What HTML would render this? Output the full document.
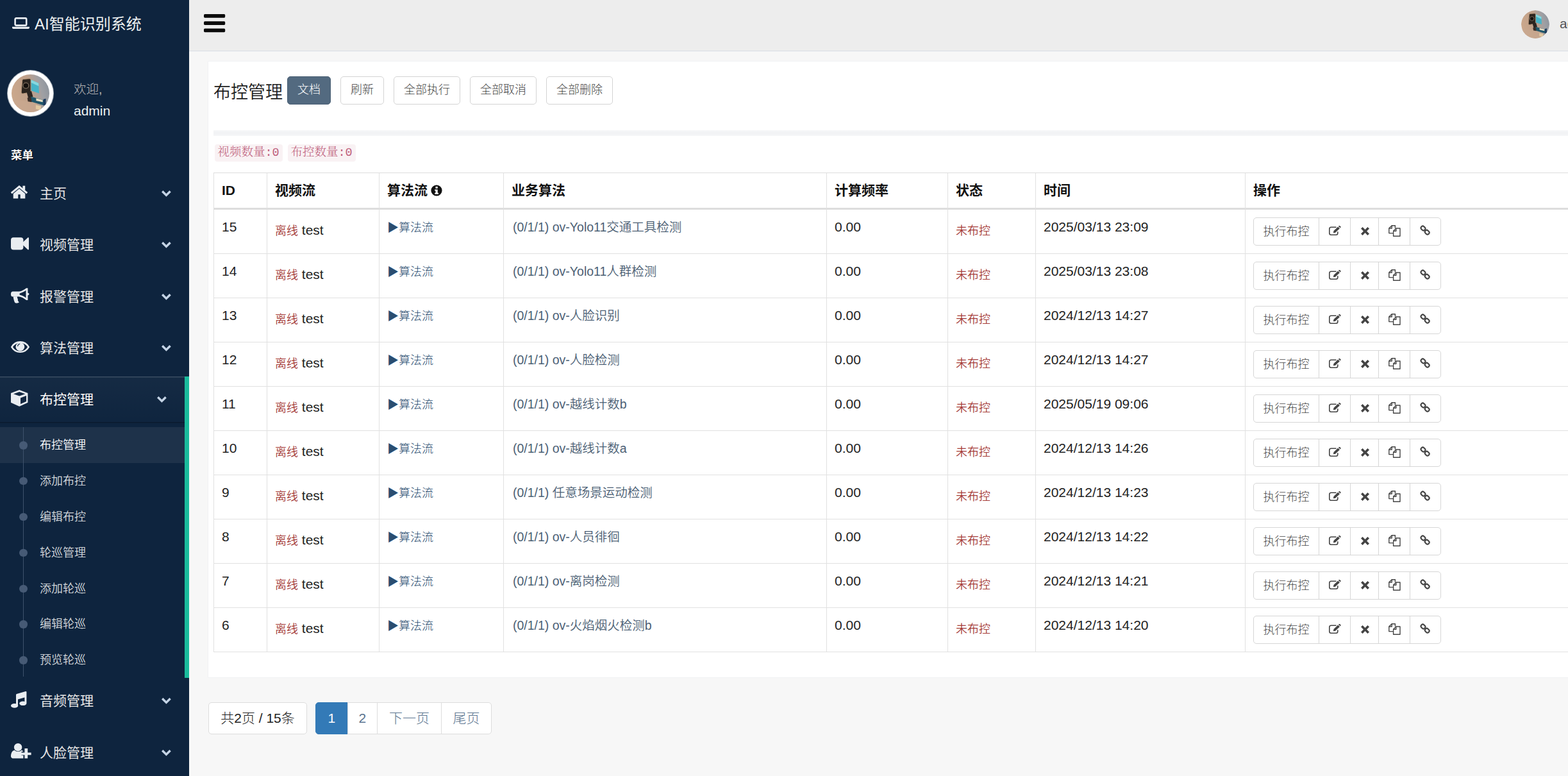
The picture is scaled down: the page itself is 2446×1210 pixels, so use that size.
<!DOCTYPE html>
<html lang="zh-CN">
<head>
<meta charset="utf-8">
<title>AI智能识别系统 - 布控管理</title>
<style>
*{box-sizing:border-box;margin:0;padding:0}
html,body{width:2446px;height:1210px;overflow:hidden}
body{background:#f7f7f7;font-weight:300;font-family:"Liberation Sans","Noto Sans CJK SC",sans-serif;font-size:21px;color:#222;position:relative;line-height:30px}
a{text-decoration:none;color:inherit}
svg{display:block}
ul{list-style:none}

/* ---------- sidebar ---------- */
#side{position:absolute;left:0;top:0;width:295px;height:1210px;background:#0e243e;color:#e7e7e7;overflow:hidden;font-weight:400}
#brand{position:absolute;left:18.5px;top:23px;height:30px;color:#ecf0f1;font-size:24px;line-height:30px;white-space:nowrap;padding-left:35.5px}
#brand svg{position:absolute;left:0;top:4.2px}
#avatar{position:absolute;left:11px;top:109px;width:73px;height:73px;border-radius:50%;background:#fff;border:1px solid rgba(52,73,94,.44);overflow:hidden}
#avatar svg{position:absolute;left:6px;top:6px}
#welcome{position:absolute;left:115px;top:125px;font-size:19.5px;color:#bab8b8;line-height:28px;font-weight:300}
#uname{position:absolute;left:115px;top:159px;font-size:21px;color:#ecf0f1;line-height:28px}
#menuh{position:absolute;left:17px;top:229px;font-size:17.5px;font-weight:bold;color:#fff;line-height:26px;text-shadow:1px 1px #000}
#menu{position:absolute;left:0;top:265.75px;width:295px}
#menu>li{position:relative}
#menu>li>a{display:block;position:relative;height:71.5px;margin-bottom:9px;font-size:21px;line-height:71.5px;padding-left:62px;color:#e7e7e7;white-space:nowrap}
#menu>li>a .ic{position:absolute;left:17px;top:-2px;height:71.5px;display:flex;align-items:center}
#menu>li>a .chev{position:absolute;left:252px;top:31px}
#menu>li.active{border-right:7px solid #1abb9c;margin-top:-1px}
#menu>li.active>a{margin-bottom:7.75px;background:linear-gradient(rgba(255,255,255,.03),rgba(255,255,255,.005));box-shadow:rgba(0,0,0,.25) 0 1.5px 0, inset rgba(255,255,255,.16) 0 1.5px 0;text-shadow:rgba(0,0,0,.25) 0 -1px 0;color:#fff}
#menu>li.active>a .chev{left:245px}
#sub{position:relative}
#sub:after{content:"";position:absolute;left:35.5px;top:0;bottom:2px;width:1.5px;background:#3d526c}
#sub li{position:relative;height:55.9px;line-height:57.9px;font-size:18px;padding-left:62px;color:rgba(255,255,255,.84);font-weight:350;white-space:nowrap}
#sub li:before{content:"";position:absolute;left:30px;top:22px;width:12.5px;height:12.5px;border-radius:50%;background:#465a75;z-index:1}
#sub li.cur{background:rgba(255,255,255,.065);color:#fff}

/* ---------- top bar ---------- */
#top{position:absolute;left:295px;top:0;width:2151px;height:80px;background:#ededed;border-bottom:1.5px solid #d9dee4}
#bars{position:absolute;left:23px;top:22px}
#tav{position:absolute;left:2078px;top:16px;width:44px;height:44px;border-radius:50%;overflow:hidden}
#tname{position:absolute;left:2138px;top:22px;font-size:21px;color:#515356;line-height:30px;white-space:nowrap}

/* ---------- panel ---------- */
#panel{position:absolute;left:324px;top:95px;width:2200px;height:962px;background:#fff;border:1px solid #f1f2f4}
#title{position:absolute;left:8px;top:28px;font-weight:350;font-size:27px;line-height:40px;color:#1c1c1c;white-space:nowrap}
.btn{position:absolute;top:22.7px;height:44px;border:1px solid #d4d4d4;border-radius:5px;background:#fff;color:#444;font-size:18px;line-height:40px;text-align:center;white-space:nowrap}
.btn.dark{background:#536a80;border-color:#4b6075;color:#fff}
#hr{position:absolute;left:8px;top:107px;width:2200px;height:9px;background:linear-gradient(#f7f8f9,#f2f3f5 35%,#f2f3f5 65%,#f7f8f9)}
code{position:absolute;top:129px;height:27px;line-height:27px;padding:0 5px;font-family:"Liberation Mono","Noto Serif CJK SC",monospace;font-size:18.5px;color:#bf5f7c;font-weight:300;background:#f9f2f4;border-radius:4px;white-space:nowrap}

/* ---------- table ---------- */
#tb{position:absolute;left:8px;top:173px;border-collapse:separate;border-spacing:0;table-layout:fixed;width:2200px;border-top:1px solid #ddd}
#tb th,#tb td{border-left:1px solid #e1e1e1;border-bottom:1px solid #e1e1e1;padding:12px 12px 0 12px;text-align:left;vertical-align:top;white-space:nowrap;overflow:hidden}
#tb th{height:57px;font-weight:bold;border-bottom:3px solid #ddd;line-height:30px;color:#111}
#tb td{height:69px;line-height:30px;color:#222}
.c2{position:relative;top:5px}
.lab{font-size:18px;color:#a53c38;font-weight:350}
.flow{font-size:18px;color:#2a4d70}
.alg{font-size:19.5px;color:#4b6074;position:relative;left:2px;font-weight:350}
.bg{display:flex;height:44px;width:293px;border:1px solid #d6d6d6;border-radius:5px;background:#fff}
.bg>span{display:flex;align-items:center;justify-content:center;padding-bottom:3px;border-right:1px solid #d6d6d6;font-size:18px;color:#444;height:100%}
.bg>span:last-child{border-right:0}
.b1{width:102px;padding-bottom:0 !important;color:#484848 !important}.b2{width:49px}.b3{width:44px;padding-bottom:1.5px !important;padding-left:1px}.b4{width:49px}.b5{width:47px}

/* ---------- pagination ---------- */
.pg{position:absolute;top:1095px;height:49.5px;border:1px solid #ddd;background:#fff;font-size:21px;line-height:47px;text-align:center;color:#5a738e;white-space:nowrap}
</style>
</head>
<body>

<div id="side">
  <a id="brand"><svg width="27" height="19" viewBox="0 0 27 19"><rect x="4.6" y="1.4" width="17.6" height="11.2" rx="1.6" fill="none" stroke="#e9edf1" stroke-width="2.6"/><path fill="#e9edf1" d="M0 14.8h27v1.3c0 1.1-.9 2-2 2H2c-1.1 0-2-.9-2-2z"/></svg>AI智能识别系统</a>
  <div id="avatar"><svg width="59" height="59" viewBox="0 0 60 60"><defs><linearGradient id="avg59" x1="0" y1=".55" x2="1" y2=".3"><stop offset="0" stop-color="#cba88c"/><stop offset=".5" stop-color="#bfa08a"/><stop offset=".78" stop-color="#9fa0a4"/><stop offset="1" stop-color="#8d949c"/></linearGradient><clipPath id="cavg59"><circle cx="30" cy="30" r="30"/></clipPath></defs><g clip-path="url(#cavg59)"><rect width="60" height="60" fill="url(#avg59)"/><path d="M0 40 40 44 44 60H0z" fill="#c9a890" opacity=".7"/><path d="M30.7 8.4 42.9 14 43.7 30 31.1 25.8z" fill="#46b4c8"/><path d="M30.7 8.4 42.9 14 43.1 18.6 30.8 13z" fill="#86d8e0"/><path d="M17 9.6Q17 7.7 19 7.5L28.5 6.8Q30.5 6.8 30.5 8.8V26Q30.5 28 28.5 28.6L18 30.6Q15.6 30.9 15.4 28.5z" fill="#2b241e" stroke="#b39476" stroke-width="1"/><circle cx="22.8" cy="17.8" r="4.5" fill="#15110e" stroke="#7a6a5a" stroke-width="1.3"/><path d="M24 28 31.5 26.5 34 35 27 39z" fill="#2c2622"/><path d="M30.5 35 51 41 51 49 30 43z" fill="#1f566a"/><path d="M25 37 31 36 32 44 26 43z" fill="#3a2e28"/><path d="M39 38 49.5 40.6 49.5 44 39 41.6z" fill="#e9dfc6"/><path d="M38.5 48.5 47 50 46 56.5 38.5 55z" fill="#e2c9a0"/><path d="M50.5 39.5 54.5 38.5 54.5 48 50.5 49.5z" fill="#1d3c5e"/></g></svg></div>
  <div id="welcome">欢迎,</div>
  <div id="uname">admin</div>
  <div id="menuh">菜单</div>
  <ul id="menu">
    <li><a><span class="ic"><svg width="26" height="21" viewBox="0 0 26 21"><g fill="#e9edf1"><path d="M13 5.3 3.7 12.9v7.5h7.6v-6.2h3.4v6.2h7.6v-7.5z"/><rect x="18.4" y="0.7" width="3.8" height="7"/><path d="M13 0 -.2 10.9l1.9 2.3L13 4l11.3 9.2 1.9-2.3z"/></g></svg></span>主页<span class="chev"><svg width="15" height="10" viewBox="0 0 15 10"><path fill="#c5d4e6" d="M0 2.4 2.4 0 7.4 5 12.4 0 14.8 2.4 7.4 9.8z"/></svg></span></a></li>
    <li><a><span class="ic"><svg width="28" height="20" viewBox="0 0 28 20"><g fill="#e9edf1"><rect x="0" y="0.2" width="19.4" height="19.4" rx="4"/><path d="M19 7.6 26.4.6c.7-.6 1.6-.2 1.6.6v17.4c0 .8-.9 1.2-1.6.6L19 12.2z"/></g></svg></span>视频管理<span class="chev"><svg width="15" height="10" viewBox="0 0 15 10"><path fill="#c5d4e6" d="M0 2.4 2.4 0 7.4 5 12.4 0 14.8 2.4 7.4 9.8z"/></svg></span></a></li>
    <li><a><span class="ic"><svg width="29" height="24" viewBox="0 0 29 24"><g fill="#e9edf1"><path fill-rule="evenodd" d="M3 5.6h9.6C17 5 21 2.6 24 .2h2.4v7.6c1.3 0 2 .8 2 1.8s-.7 1.8-2 1.8V19H24c-3-2.4-7-4.8-11.4-5.4H3c-1.8 0-3-1.4-3-3.2V8.8C0 7 1.2 5.6 3 5.6zM23.5 3.8c-2.9 2.1-6.2 3.8-9.9 4.6v2.4c3.7.8 7 2.5 9.9 4.6z"/><path d="M3.6 13.2h6.4c-.4 1.6.1 3 1 4.2-.7 1.4.2 3.3 1.9 4.9-.9 1.500-5 1.700-6.600.8-.9-2-2.200-5.300-2.700-9.900z"/></g></svg></span>报警管理<span class="chev"><svg width="15" height="10" viewBox="0 0 15 10"><path fill="#c5d4e6" d="M0 2.4 2.4 0 7.4 5 12.4 0 14.8 2.4 7.4 9.8z"/></svg></span></a></li>
    <li><a><span class="ic"><svg width="29" height="18.4" viewBox="0 0 29 18.4" style="overflow:visible"><path d="M1.4 9.1C7.5 -1.2 21.5 -1.2 27.6 9.1 21.5 19.4 7.5 19.4 1.4 9.1z" fill="none" stroke="#e9edf1" stroke-width="2.6"/><ellipse cx="14.4" cy="8.7" rx="6.9" ry="6.5" fill="#e9edf1"/><path d="M10.6 7.6c.2-1.8 1.4-3 3.2-3.4" fill="none" stroke="#0e243e" stroke-width="1.1" stroke-linecap="round"/></svg></span>算法管理<span class="chev"><svg width="15" height="10" viewBox="0 0 15 10"><path fill="#c5d4e6" d="M0 2.4 2.4 0 7.4 5 12.4 0 14.8 2.4 7.4 9.8z"/></svg></span></a></li>
    <li class="active"><a><span class="ic"><svg width="27" height="26" viewBox="0 0 27 26"><path fill="#e9edf1" fill-rule="evenodd" d="M13.2 0 26.4 5.1V19.7L13.2 25.8 0 19.7V5.1zM13.2 2.9 4 6.2l9.2 3.3 9.2-3.3zM15 12.6V22l9-4.1V9z"/></svg></span>布控管理<span class="chev"><svg width="15" height="10" viewBox="0 0 15 10"><path fill="#c5d4e6" d="M0 2.4 2.4 0 7.4 5 12.4 0 14.8 2.4 7.4 9.8z"/></svg></span></a>
      <ul id="sub">
        <li class="cur">布控管理</li>
        <li>添加布控</li>
        <li>编辑布控</li>
        <li>轮巡管理</li>
        <li>添加轮巡</li>
        <li>编辑轮巡</li>
        <li>预览轮巡</li>
      </ul>
    </li>
    <li><a><span class="ic"><svg width="25" height="26" viewBox="0 0 25 26"><g fill="#e9edf1"><path d="M8 5.6c0-.8.5-1.4 1.2-1.6L23 .1c.8-.2 1.4.3 1.4 1.1v17H21.4V9.4L11 12.4v9.8H8z"/><ellipse cx="5.6" cy="22.4" rx="5.6" ry="3.3"/><ellipse cx="18.8" cy="18.8" rx="5.6" ry="3.3"/></g></svg></span>音频管理<span class="chev"><svg width="15" height="10" viewBox="0 0 15 10"><path fill="#c5d4e6" d="M0 2.4 2.4 0 7.4 5 12.4 0 14.8 2.4 7.4 9.8z"/></svg></span></a></li>
    <li><a><span class="ic"><svg width="32" height="24" viewBox="0 0 32 24"><g fill="#e9edf1"><circle cx="11.1" cy="6.2" r="6.2"/><path d="M5.8 10.8c1.4 1.4 3.2 2.2 5.3 2.2s3.9-.8 5.3-2.2c1.3.2 2.3 1 3 2.2h-2.9v5.8h2.9v4.8H4.2C1.8 23.6 0 22.4 0 20.2c0-4.4 1.8-8.8 5.8-9.4z"/><path d="M21.4 8h4.8v6.4h5.4v3.8h-5.4v5.4h-4.8v-5.4h-5.6v-3.8h5.6z"/></g></svg></span>人脸管理<span class="chev"><svg width="15" height="10" viewBox="0 0 15 10"><path fill="#c5d4e6" d="M0 2.4 2.4 0 7.4 5 12.4 0 14.8 2.4 7.4 9.8z"/></svg></span></a></li>
  </ul>
</div>

<div id="top">
  <div id="bars"><svg width="34" height="29" viewBox="0 0 34 29"><g fill="#0b0b0b"><rect x="0" y="0" width="33.2" height="5.7" rx="1.6"/><rect x="0" y="11.2" width="33.2" height="5.7" rx="1.6"/><rect x="0" y="22.5" width="33.2" height="5.7" rx="1.6"/></g></svg></div>
  <div id="tav"><svg width="44" height="44" viewBox="0 0 60 60"><defs><linearGradient id="avg44" x1="0" y1=".55" x2="1" y2=".3"><stop offset="0" stop-color="#cba88c"/><stop offset=".5" stop-color="#bfa08a"/><stop offset=".78" stop-color="#9fa0a4"/><stop offset="1" stop-color="#8d949c"/></linearGradient><clipPath id="cavg44"><circle cx="30" cy="30" r="30"/></clipPath></defs><g clip-path="url(#cavg44)"><rect width="60" height="60" fill="url(#avg44)"/><path d="M0 40 40 44 44 60H0z" fill="#c9a890" opacity=".7"/><path d="M30.7 8.4 42.9 14 43.7 30 31.1 25.8z" fill="#46b4c8"/><path d="M30.7 8.4 42.9 14 43.1 18.6 30.8 13z" fill="#86d8e0"/><path d="M17 9.6Q17 7.7 19 7.5L28.5 6.8Q30.5 6.8 30.5 8.8V26Q30.5 28 28.5 28.6L18 30.6Q15.6 30.9 15.4 28.5z" fill="#2b241e" stroke="#b39476" stroke-width="1"/><circle cx="22.8" cy="17.8" r="4.5" fill="#15110e" stroke="#7a6a5a" stroke-width="1.3"/><path d="M24 28 31.5 26.5 34 35 27 39z" fill="#2c2622"/><path d="M30.5 35 51 41 51 49 30 43z" fill="#1f566a"/><path d="M25 37 31 36 32 44 26 43z" fill="#3a2e28"/><path d="M39 38 49.5 40.6 49.5 44 39 41.6z" fill="#e9dfc6"/><path d="M38.5 48.5 47 50 46 56.5 38.5 55z" fill="#e2c9a0"/><path d="M50.5 39.5 54.5 38.5 54.5 48 50.5 49.5z" fill="#1d3c5e"/></g></svg></div>
  <div id="tname">admin</div>
</div>

<div id="panel">
  <div id="title">布控管理</div>
  <a class="btn dark" style="left:123px;width:68px">文档</a>
  <a class="btn" style="left:206px;width:68px">刷新</a>
  <a class="btn" style="left:289px;width:104px">全部执行</a>
  <a class="btn" style="left:408px;width:104px">全部取消</a>
  <a class="btn" style="left:527px;width:104px">全部删除</a>
  <div id="hr"></div>
  <code style="left:9.5px">视频数量:0</code>
  <code style="left:123.5px">布控数量:0</code>
  <table id="tb">
    <colgroup><col style="width:83px"><col style="width:175px"><col style="width:194px"><col style="width:504px"><col style="width:189px"><col style="width:137px"><col style="width:327px"><col></colgroup>
    <thead><tr><th>ID</th><th>视频流</th><th>算法流 <svg width="18" height="18" viewBox="0 0 18 18" style="display:inline-block;vertical-align:-1.5px;margin-left:-1px"><circle cx="9" cy="9" r="8.6" fill="#111"/><g fill="#fff"><rect x="7.5" y="2.9" width="3.2" height="2.9"/><path d="M6.2 7.4h4.5v5.3h1.3v2H6.2v-2h1.3V9.4H6.2z"/></g></svg></th><th>业务算法</th><th>计算频率</th><th>状态</th><th>时间</th><th>操作</th></tr></thead>
    <tbody>
      <tr><td>15</td><td><div class="c2"><span class="lab">离线</span> test</div></td><td><span class="flow">▶算法流</span></td><td><span class="alg">(0/1/1) ov-Yolo11交通工具检测</span></td><td>0.00</td><td><div class="c2"><span class="lab">未布控</span></div></td><td>2025/03/13 23:09</td><td><div class="bg"><span class="b1">执行布控</span><span class="b2"><svg width="19" height="15" viewBox="0 0 19 15"><path d="M11 2.2H3.5c-1.5 0-2.7 1.2-2.7 2.7v6.6c0 1.5 1.2 2.7 2.7 2.7h7.6c1.5 0 2.7-1.2 2.7-2.7V9.8" fill="none" stroke="#444" stroke-width="1.6" stroke-linecap="round"/><path fill="#444" d="M6.8 11.2 7.5 8.1 14.2 1.5 16.9 4.2 10.1 10.8zM15 .800l.7-.7c.4-.4 1-.4 1.4 0l1.2 1.2c.4.4.4 1 0 1.4l-.7.7z"/></svg></span><span class="b3"><svg width="13" height="13" viewBox="0 0 13 13"><path fill="#444" d="M2.6 0 6.5 3.9 10.4 0 13 2.6 9.1 6.5 13 10.4 10.4 13 6.5 9.1 2.6 13 0 10.4 3.9 6.5 0 2.6z"/></svg></span><span class="b4"><svg width="19" height="18" viewBox="0 0 19 18"><g fill="none" stroke="#444" stroke-width="1.4" stroke-linejoin="round"><path d="M7.6 12.6H.8V5L5.2.7h5.2v4"/><path d="M5.2.7V5H.8"/><path d="M7.6 9.2 11.8 5h6.2v12.2H7.6z"/><path d="M11.8 5v4.2H7.6"/></g></svg></span><span class="b5"><svg width="17" height="17" viewBox="0 0 17 17"><g fill="none" stroke="#444" stroke-width="2.1"><rect x="-3.6" y="-2.8" width="7.2" height="5.6" rx="2.8" transform="translate(5 5) rotate(45)"/><rect x="-3.6" y="-2.8" width="7.2" height="5.6" rx="2.8" transform="translate(11.2 11.2) rotate(45)"/></g></svg></span></div></td></tr>
      <tr><td>14</td><td><div class="c2"><span class="lab">离线</span> test</div></td><td><span class="flow">▶算法流</span></td><td><span class="alg">(0/1/1) ov-Yolo11人群检测</span></td><td>0.00</td><td><div class="c2"><span class="lab">未布控</span></div></td><td>2025/03/13 23:08</td><td><div class="bg"><span class="b1">执行布控</span><span class="b2"><svg width="19" height="15" viewBox="0 0 19 15"><path d="M11 2.2H3.5c-1.5 0-2.7 1.2-2.7 2.7v6.6c0 1.5 1.2 2.7 2.7 2.7h7.6c1.5 0 2.7-1.2 2.7-2.7V9.8" fill="none" stroke="#444" stroke-width="1.6" stroke-linecap="round"/><path fill="#444" d="M6.8 11.2 7.5 8.1 14.2 1.5 16.9 4.2 10.1 10.8zM15 .800l.7-.7c.4-.4 1-.4 1.4 0l1.2 1.2c.4.4.4 1 0 1.4l-.7.7z"/></svg></span><span class="b3"><svg width="13" height="13" viewBox="0 0 13 13"><path fill="#444" d="M2.6 0 6.5 3.9 10.4 0 13 2.6 9.1 6.5 13 10.4 10.4 13 6.5 9.1 2.6 13 0 10.4 3.9 6.5 0 2.6z"/></svg></span><span class="b4"><svg width="19" height="18" viewBox="0 0 19 18"><g fill="none" stroke="#444" stroke-width="1.4" stroke-linejoin="round"><path d="M7.6 12.6H.8V5L5.2.7h5.2v4"/><path d="M5.2.7V5H.8"/><path d="M7.6 9.2 11.8 5h6.2v12.2H7.6z"/><path d="M11.8 5v4.2H7.6"/></g></svg></span><span class="b5"><svg width="17" height="17" viewBox="0 0 17 17"><g fill="none" stroke="#444" stroke-width="2.1"><rect x="-3.6" y="-2.8" width="7.2" height="5.6" rx="2.8" transform="translate(5 5) rotate(45)"/><rect x="-3.6" y="-2.8" width="7.2" height="5.6" rx="2.8" transform="translate(11.2 11.2) rotate(45)"/></g></svg></span></div></td></tr>
      <tr><td>13</td><td><div class="c2"><span class="lab">离线</span> test</div></td><td><span class="flow">▶算法流</span></td><td><span class="alg">(0/1/1) ov-人脸识别</span></td><td>0.00</td><td><div class="c2"><span class="lab">未布控</span></div></td><td>2024/12/13 14:27</td><td><div class="bg"><span class="b1">执行布控</span><span class="b2"><svg width="19" height="15" viewBox="0 0 19 15"><path d="M11 2.2H3.5c-1.5 0-2.7 1.2-2.7 2.7v6.6c0 1.5 1.2 2.7 2.7 2.7h7.6c1.5 0 2.7-1.2 2.7-2.7V9.8" fill="none" stroke="#444" stroke-width="1.6" stroke-linecap="round"/><path fill="#444" d="M6.8 11.2 7.5 8.1 14.2 1.5 16.9 4.2 10.1 10.8zM15 .800l.7-.7c.4-.4 1-.4 1.4 0l1.2 1.2c.4.4.4 1 0 1.4l-.7.7z"/></svg></span><span class="b3"><svg width="13" height="13" viewBox="0 0 13 13"><path fill="#444" d="M2.6 0 6.5 3.9 10.4 0 13 2.6 9.1 6.5 13 10.4 10.4 13 6.5 9.1 2.6 13 0 10.4 3.9 6.5 0 2.6z"/></svg></span><span class="b4"><svg width="19" height="18" viewBox="0 0 19 18"><g fill="none" stroke="#444" stroke-width="1.4" stroke-linejoin="round"><path d="M7.6 12.6H.8V5L5.2.7h5.2v4"/><path d="M5.2.7V5H.8"/><path d="M7.6 9.2 11.8 5h6.2v12.2H7.6z"/><path d="M11.8 5v4.2H7.6"/></g></svg></span><span class="b5"><svg width="17" height="17" viewBox="0 0 17 17"><g fill="none" stroke="#444" stroke-width="2.1"><rect x="-3.6" y="-2.8" width="7.2" height="5.6" rx="2.8" transform="translate(5 5) rotate(45)"/><rect x="-3.6" y="-2.8" width="7.2" height="5.6" rx="2.8" transform="translate(11.2 11.2) rotate(45)"/></g></svg></span></div></td></tr>
      <tr><td>12</td><td><div class="c2"><span class="lab">离线</span> test</div></td><td><span class="flow">▶算法流</span></td><td><span class="alg">(0/1/1) ov-人脸检测</span></td><td>0.00</td><td><div class="c2"><span class="lab">未布控</span></div></td><td>2024/12/13 14:27</td><td><div class="bg"><span class="b1">执行布控</span><span class="b2"><svg width="19" height="15" viewBox="0 0 19 15"><path d="M11 2.2H3.5c-1.5 0-2.7 1.2-2.7 2.7v6.6c0 1.5 1.2 2.7 2.7 2.7h7.6c1.5 0 2.7-1.2 2.7-2.7V9.8" fill="none" stroke="#444" stroke-width="1.6" stroke-linecap="round"/><path fill="#444" d="M6.8 11.2 7.5 8.1 14.2 1.5 16.9 4.2 10.1 10.8zM15 .800l.7-.7c.4-.4 1-.4 1.4 0l1.2 1.2c.4.4.4 1 0 1.4l-.7.7z"/></svg></span><span class="b3"><svg width="13" height="13" viewBox="0 0 13 13"><path fill="#444" d="M2.6 0 6.5 3.9 10.4 0 13 2.6 9.1 6.5 13 10.4 10.4 13 6.5 9.1 2.6 13 0 10.4 3.9 6.5 0 2.6z"/></svg></span><span class="b4"><svg width="19" height="18" viewBox="0 0 19 18"><g fill="none" stroke="#444" stroke-width="1.4" stroke-linejoin="round"><path d="M7.6 12.6H.8V5L5.2.7h5.2v4"/><path d="M5.2.7V5H.8"/><path d="M7.6 9.2 11.8 5h6.2v12.2H7.6z"/><path d="M11.8 5v4.2H7.6"/></g></svg></span><span class="b5"><svg width="17" height="17" viewBox="0 0 17 17"><g fill="none" stroke="#444" stroke-width="2.1"><rect x="-3.6" y="-2.8" width="7.2" height="5.6" rx="2.8" transform="translate(5 5) rotate(45)"/><rect x="-3.6" y="-2.8" width="7.2" height="5.6" rx="2.8" transform="translate(11.2 11.2) rotate(45)"/></g></svg></span></div></td></tr>
      <tr><td>11</td><td><div class="c2"><span class="lab">离线</span> test</div></td><td><span class="flow">▶算法流</span></td><td><span class="alg">(0/1/1) ov-越线计数b</span></td><td>0.00</td><td><div class="c2"><span class="lab">未布控</span></div></td><td>2025/05/19 09:06</td><td><div class="bg"><span class="b1">执行布控</span><span class="b2"><svg width="19" height="15" viewBox="0 0 19 15"><path d="M11 2.2H3.5c-1.5 0-2.7 1.2-2.7 2.7v6.6c0 1.5 1.2 2.7 2.7 2.7h7.6c1.5 0 2.7-1.2 2.7-2.7V9.8" fill="none" stroke="#444" stroke-width="1.6" stroke-linecap="round"/><path fill="#444" d="M6.8 11.2 7.5 8.1 14.2 1.5 16.9 4.2 10.1 10.8zM15 .800l.7-.7c.4-.4 1-.4 1.4 0l1.2 1.2c.4.4.4 1 0 1.4l-.7.7z"/></svg></span><span class="b3"><svg width="13" height="13" viewBox="0 0 13 13"><path fill="#444" d="M2.6 0 6.5 3.9 10.4 0 13 2.6 9.1 6.5 13 10.4 10.4 13 6.5 9.1 2.6 13 0 10.4 3.9 6.5 0 2.6z"/></svg></span><span class="b4"><svg width="19" height="18" viewBox="0 0 19 18"><g fill="none" stroke="#444" stroke-width="1.4" stroke-linejoin="round"><path d="M7.6 12.6H.8V5L5.2.7h5.2v4"/><path d="M5.2.7V5H.8"/><path d="M7.6 9.2 11.8 5h6.2v12.2H7.6z"/><path d="M11.8 5v4.2H7.6"/></g></svg></span><span class="b5"><svg width="17" height="17" viewBox="0 0 17 17"><g fill="none" stroke="#444" stroke-width="2.1"><rect x="-3.6" y="-2.8" width="7.2" height="5.6" rx="2.8" transform="translate(5 5) rotate(45)"/><rect x="-3.6" y="-2.8" width="7.2" height="5.6" rx="2.8" transform="translate(11.2 11.2) rotate(45)"/></g></svg></span></div></td></tr>
      <tr><td>10</td><td><div class="c2"><span class="lab">离线</span> test</div></td><td><span class="flow">▶算法流</span></td><td><span class="alg">(0/1/1) ov-越线计数a</span></td><td>0.00</td><td><div class="c2"><span class="lab">未布控</span></div></td><td>2024/12/13 14:26</td><td><div class="bg"><span class="b1">执行布控</span><span class="b2"><svg width="19" height="15" viewBox="0 0 19 15"><path d="M11 2.2H3.5c-1.5 0-2.7 1.2-2.7 2.7v6.6c0 1.5 1.2 2.7 2.7 2.7h7.6c1.5 0 2.7-1.2 2.7-2.7V9.8" fill="none" stroke="#444" stroke-width="1.6" stroke-linecap="round"/><path fill="#444" d="M6.8 11.2 7.5 8.1 14.2 1.5 16.9 4.2 10.1 10.8zM15 .800l.7-.7c.4-.4 1-.4 1.4 0l1.2 1.2c.4.4.4 1 0 1.4l-.7.7z"/></svg></span><span class="b3"><svg width="13" height="13" viewBox="0 0 13 13"><path fill="#444" d="M2.6 0 6.5 3.9 10.4 0 13 2.6 9.1 6.5 13 10.4 10.4 13 6.5 9.1 2.6 13 0 10.4 3.9 6.5 0 2.6z"/></svg></span><span class="b4"><svg width="19" height="18" viewBox="0 0 19 18"><g fill="none" stroke="#444" stroke-width="1.4" stroke-linejoin="round"><path d="M7.6 12.6H.8V5L5.2.7h5.2v4"/><path d="M5.2.7V5H.8"/><path d="M7.6 9.2 11.8 5h6.2v12.2H7.6z"/><path d="M11.8 5v4.2H7.6"/></g></svg></span><span class="b5"><svg width="17" height="17" viewBox="0 0 17 17"><g fill="none" stroke="#444" stroke-width="2.1"><rect x="-3.6" y="-2.8" width="7.2" height="5.6" rx="2.8" transform="translate(5 5) rotate(45)"/><rect x="-3.6" y="-2.8" width="7.2" height="5.6" rx="2.8" transform="translate(11.2 11.2) rotate(45)"/></g></svg></span></div></td></tr>
      <tr><td>9</td><td><div class="c2"><span class="lab">离线</span> test</div></td><td><span class="flow">▶算法流</span></td><td><span class="alg">(0/1/1) 任意场景运动检测</span></td><td>0.00</td><td><div class="c2"><span class="lab">未布控</span></div></td><td>2024/12/13 14:23</td><td><div class="bg"><span class="b1">执行布控</span><span class="b2"><svg width="19" height="15" viewBox="0 0 19 15"><path d="M11 2.2H3.5c-1.5 0-2.7 1.2-2.7 2.7v6.6c0 1.5 1.2 2.7 2.7 2.7h7.6c1.5 0 2.7-1.2 2.7-2.7V9.8" fill="none" stroke="#444" stroke-width="1.6" stroke-linecap="round"/><path fill="#444" d="M6.8 11.2 7.5 8.1 14.2 1.5 16.9 4.2 10.1 10.8zM15 .800l.7-.7c.4-.4 1-.4 1.4 0l1.2 1.2c.4.4.4 1 0 1.4l-.7.7z"/></svg></span><span class="b3"><svg width="13" height="13" viewBox="0 0 13 13"><path fill="#444" d="M2.6 0 6.5 3.9 10.4 0 13 2.6 9.1 6.5 13 10.4 10.4 13 6.5 9.1 2.6 13 0 10.4 3.9 6.5 0 2.6z"/></svg></span><span class="b4"><svg width="19" height="18" viewBox="0 0 19 18"><g fill="none" stroke="#444" stroke-width="1.4" stroke-linejoin="round"><path d="M7.6 12.6H.8V5L5.2.7h5.2v4"/><path d="M5.2.7V5H.8"/><path d="M7.6 9.2 11.8 5h6.2v12.2H7.6z"/><path d="M11.8 5v4.2H7.6"/></g></svg></span><span class="b5"><svg width="17" height="17" viewBox="0 0 17 17"><g fill="none" stroke="#444" stroke-width="2.1"><rect x="-3.6" y="-2.8" width="7.2" height="5.6" rx="2.8" transform="translate(5 5) rotate(45)"/><rect x="-3.6" y="-2.8" width="7.2" height="5.6" rx="2.8" transform="translate(11.2 11.2) rotate(45)"/></g></svg></span></div></td></tr>
      <tr><td>8</td><td><div class="c2"><span class="lab">离线</span> test</div></td><td><span class="flow">▶算法流</span></td><td><span class="alg">(0/1/1) ov-人员徘徊</span></td><td>0.00</td><td><div class="c2"><span class="lab">未布控</span></div></td><td>2024/12/13 14:22</td><td><div class="bg"><span class="b1">执行布控</span><span class="b2"><svg width="19" height="15" viewBox="0 0 19 15"><path d="M11 2.2H3.5c-1.5 0-2.7 1.2-2.7 2.7v6.6c0 1.5 1.2 2.7 2.7 2.7h7.6c1.5 0 2.7-1.2 2.7-2.7V9.8" fill="none" stroke="#444" stroke-width="1.6" stroke-linecap="round"/><path fill="#444" d="M6.8 11.2 7.5 8.1 14.2 1.5 16.9 4.2 10.1 10.8zM15 .800l.7-.7c.4-.4 1-.4 1.4 0l1.2 1.2c.4.4.4 1 0 1.4l-.7.7z"/></svg></span><span class="b3"><svg width="13" height="13" viewBox="0 0 13 13"><path fill="#444" d="M2.6 0 6.5 3.9 10.4 0 13 2.6 9.1 6.5 13 10.4 10.4 13 6.5 9.1 2.6 13 0 10.4 3.9 6.5 0 2.6z"/></svg></span><span class="b4"><svg width="19" height="18" viewBox="0 0 19 18"><g fill="none" stroke="#444" stroke-width="1.4" stroke-linejoin="round"><path d="M7.6 12.6H.8V5L5.2.7h5.2v4"/><path d="M5.2.7V5H.8"/><path d="M7.6 9.2 11.8 5h6.2v12.2H7.6z"/><path d="M11.8 5v4.2H7.6"/></g></svg></span><span class="b5"><svg width="17" height="17" viewBox="0 0 17 17"><g fill="none" stroke="#444" stroke-width="2.1"><rect x="-3.6" y="-2.8" width="7.2" height="5.6" rx="2.8" transform="translate(5 5) rotate(45)"/><rect x="-3.6" y="-2.8" width="7.2" height="5.6" rx="2.8" transform="translate(11.2 11.2) rotate(45)"/></g></svg></span></div></td></tr>
      <tr><td>7</td><td><div class="c2"><span class="lab">离线</span> test</div></td><td><span class="flow">▶算法流</span></td><td><span class="alg">(0/1/1) ov-离岗检测</span></td><td>0.00</td><td><div class="c2"><span class="lab">未布控</span></div></td><td>2024/12/13 14:21</td><td><div class="bg"><span class="b1">执行布控</span><span class="b2"><svg width="19" height="15" viewBox="0 0 19 15"><path d="M11 2.2H3.5c-1.5 0-2.7 1.2-2.7 2.7v6.6c0 1.5 1.2 2.7 2.7 2.7h7.6c1.5 0 2.7-1.2 2.7-2.7V9.8" fill="none" stroke="#444" stroke-width="1.6" stroke-linecap="round"/><path fill="#444" d="M6.8 11.2 7.5 8.1 14.2 1.5 16.9 4.2 10.1 10.8zM15 .800l.7-.7c.4-.4 1-.4 1.4 0l1.2 1.2c.4.4.4 1 0 1.4l-.7.7z"/></svg></span><span class="b3"><svg width="13" height="13" viewBox="0 0 13 13"><path fill="#444" d="M2.6 0 6.5 3.9 10.4 0 13 2.6 9.1 6.5 13 10.4 10.4 13 6.5 9.1 2.6 13 0 10.4 3.9 6.5 0 2.6z"/></svg></span><span class="b4"><svg width="19" height="18" viewBox="0 0 19 18"><g fill="none" stroke="#444" stroke-width="1.4" stroke-linejoin="round"><path d="M7.6 12.6H.8V5L5.2.7h5.2v4"/><path d="M5.2.7V5H.8"/><path d="M7.6 9.2 11.8 5h6.2v12.2H7.6z"/><path d="M11.8 5v4.2H7.6"/></g></svg></span><span class="b5"><svg width="17" height="17" viewBox="0 0 17 17"><g fill="none" stroke="#444" stroke-width="2.1"><rect x="-3.6" y="-2.8" width="7.2" height="5.6" rx="2.8" transform="translate(5 5) rotate(45)"/><rect x="-3.6" y="-2.8" width="7.2" height="5.6" rx="2.8" transform="translate(11.2 11.2) rotate(45)"/></g></svg></span></div></td></tr>
      <tr><td>6</td><td><div class="c2"><span class="lab">离线</span> test</div></td><td><span class="flow">▶算法流</span></td><td><span class="alg">(0/1/1) ov-火焰烟火检测b</span></td><td>0.00</td><td><div class="c2"><span class="lab">未布控</span></div></td><td>2024/12/13 14:20</td><td><div class="bg"><span class="b1">执行布控</span><span class="b2"><svg width="19" height="15" viewBox="0 0 19 15"><path d="M11 2.2H3.5c-1.5 0-2.7 1.2-2.7 2.7v6.6c0 1.5 1.2 2.7 2.7 2.7h7.6c1.5 0 2.7-1.2 2.7-2.7V9.8" fill="none" stroke="#444" stroke-width="1.6" stroke-linecap="round"/><path fill="#444" d="M6.8 11.2 7.5 8.1 14.2 1.5 16.9 4.2 10.1 10.8zM15 .800l.7-.7c.4-.4 1-.4 1.4 0l1.2 1.2c.4.4.4 1 0 1.4l-.7.7z"/></svg></span><span class="b3"><svg width="13" height="13" viewBox="0 0 13 13"><path fill="#444" d="M2.6 0 6.5 3.9 10.4 0 13 2.6 9.1 6.5 13 10.4 10.4 13 6.5 9.1 2.6 13 0 10.4 3.9 6.5 0 2.6z"/></svg></span><span class="b4"><svg width="19" height="18" viewBox="0 0 19 18"><g fill="none" stroke="#444" stroke-width="1.4" stroke-linejoin="round"><path d="M7.6 12.6H.8V5L5.2.7h5.2v4"/><path d="M5.2.7V5H.8"/><path d="M7.6 9.2 11.8 5h6.2v12.2H7.6z"/><path d="M11.8 5v4.2H7.6"/></g></svg></span><span class="b5"><svg width="17" height="17" viewBox="0 0 17 17"><g fill="none" stroke="#444" stroke-width="2.1"><rect x="-3.6" y="-2.8" width="7.2" height="5.6" rx="2.8" transform="translate(5 5) rotate(45)"/><rect x="-3.6" y="-2.8" width="7.2" height="5.6" rx="2.8" transform="translate(11.2 11.2) rotate(45)"/></g></svg></span></div></td></tr>
    </tbody>
  </table>
</div>

<div class="pg" style="left:325px;width:154px;border-radius:5px;color:#222">共2页 / 15条</div>
<div class="pg" style="left:492px;width:50.5px;background:#337ab7;border-color:#337ab7;color:#fff;border-radius:5px 0 0 5px">1</div>
<div class="pg" style="left:541.5px;width:47.5px">2</div>
<div class="pg" style="left:588px;width:101px">下一页</div>
<div class="pg" style="left:688px;width:79px;border-radius:0 5px 5px 0">尾页</div>

</body>
</html>
